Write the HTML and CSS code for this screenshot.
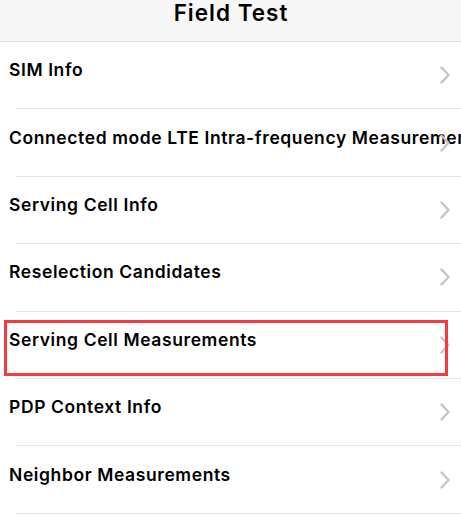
FILE: index.html
```html
<!DOCTYPE html>
<html>
<head>
<meta charset="utf-8">
<link rel="stylesheet" href="styles.css">
</head>
<body>
<div class="screen">
  <header class="nav">
    <h1 class="nav-title">Field Test</h1>
  </header>
  <ul class="list">
    <li class="row"><span class="chev"><svg width="10" height="18" viewBox="0 0 10 18"><path d="M1.5 1.5 L8.5 9 L1.5 16.5" fill="none" stroke="#c5c5c7" stroke-width="2.4" stroke-linecap="round" stroke-linejoin="round"/></svg></span><span class="label">SIM Info</span></li>
    <li class="sep"></li>
    <li class="row"><span class="chev"><svg width="10" height="18" viewBox="0 0 10 18"><path d="M1.5 1.5 L8.5 9 L1.5 16.5" fill="none" stroke="#c5c5c7" stroke-width="2.4" stroke-linecap="round" stroke-linejoin="round"/></svg></span><span class="label">Connected mode LTE Intra-frequency Measurements</span></li>
    <li class="sep"></li>
    <li class="row"><span class="chev"><svg width="10" height="18" viewBox="0 0 10 18"><path d="M1.5 1.5 L8.5 9 L1.5 16.5" fill="none" stroke="#c5c5c7" stroke-width="2.4" stroke-linecap="round" stroke-linejoin="round"/></svg></span><span class="label">Serving Cell Info</span></li>
    <li class="sep"></li>
    <li class="row"><span class="chev"><svg width="10" height="18" viewBox="0 0 10 18"><path d="M1.5 1.5 L8.5 9 L1.5 16.5" fill="none" stroke="#c5c5c7" stroke-width="2.4" stroke-linecap="round" stroke-linejoin="round"/></svg></span><span class="label">Reselection Candidates</span></li>
    <li class="sep"></li>
    <li class="row row-marked"><span class="chev"><svg width="10" height="18" viewBox="0 0 10 18"><path d="M1.5 1.5 L8.5 9 L1.5 16.5" fill="none" stroke="#c5c5c7" stroke-width="2.4" stroke-linecap="round" stroke-linejoin="round"/></svg></span><span class="label">Serving Cell Measurements</span><span class="highlight"></span></li>
    <li class="sep"></li>
    <li class="row"><span class="chev"><svg width="10" height="18" viewBox="0 0 10 18"><path d="M1.5 1.5 L8.5 9 L1.5 16.5" fill="none" stroke="#c5c5c7" stroke-width="2.4" stroke-linecap="round" stroke-linejoin="round"/></svg></span><span class="label">PDP Context Info</span></li>
    <li class="sep"></li>
    <li class="row"><span class="chev"><svg width="10" height="18" viewBox="0 0 10 18"><path d="M1.5 1.5 L8.5 9 L1.5 16.5" fill="none" stroke="#c5c5c7" stroke-width="2.4" stroke-linecap="round" stroke-linejoin="round"/></svg></span><span class="label">Neighbor Measurements</span></li>
    <li class="sep"></li>
  </ul>
</div>
</body>
</html>
```
FILE: styles.css
```css
html, body {
  margin: 0;
  padding: 0;
  background: #ffffff;
}
.screen {
  width: 461px;
  height: 515px;
  overflow: hidden;
  font-family: Inter, "Liberation Sans", Arial, sans-serif;
  color: #000;
}
.nav {
  height: 41px;
  background: #f7f7f7;
  border-bottom: 1px solid #dcdcdc;
  display: flex;
  justify-content: center;
  align-items: flex-start;
}
.nav-title {
  margin: 0;
  font-size: 22.5px;
  font-weight: 600;
  line-height: 26px;
  letter-spacing: 1px;
  padding-left: 1px;
}
.list {
  list-style: none;
  margin: 0;
  padding: 0;
}
.row {
  position: relative;
  height: 66.4px;
  display: flex;
  align-items: center;
  padding-left: 9px;
  padding-right: 11px;
}
.label {
  order: 1;
  flex: 1 1 auto;
  min-width: 0;
  white-space: nowrap;
  font-size: 17.5px;
  font-weight: 600;
  line-height: 20px;
  letter-spacing: 0.6px;
  margin-bottom: 10px;
}
.chev {
  order: 2;
  flex: 0 0 auto;
  display: flex;
}
.sep {
  height: 1px;
  margin-left: 16px;
  background: #e4e4e6;
}
.highlight {
  position: absolute;
  left: 4px;
  top: 8px;
  width: 444px;
  height: 56px;
  box-sizing: border-box;
  border: 3px solid #f23b40;
}
```
